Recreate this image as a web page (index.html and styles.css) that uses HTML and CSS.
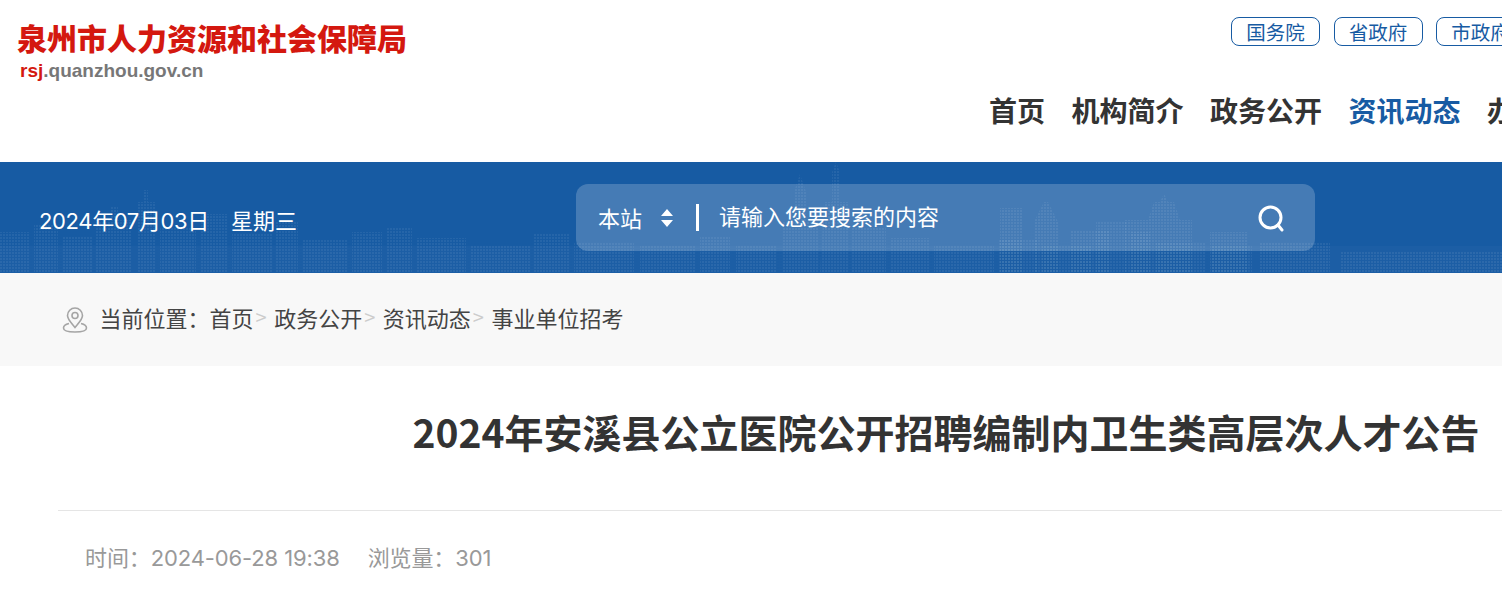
FILE: index.html
```html
<!DOCTYPE html>
<html lang="zh-CN">
<head>
  <meta charset="UTF-8">
  <meta name="viewport" content="width=device-width, initial-scale=1.0">
  <title>2024年安溪县公立医院公开招聘编制内卫生类高层次人才公告</title>
  <link rel="stylesheet" href="styles.css">
</head>
<body>
  <div class="page">
    <header class="site-header">
      <div class="logo">
        <div class="logo-name">泉州市人力资源和社会保障局</div>
        <div class="logo-url"><span>rsj</span>.quanzhou.gov.cn</div>
      </div>
      <div class="header-right">
        <div class="gov-links">
          <a class="gov-link">国务院</a>
          <a class="gov-link">省政府</a>
          <a class="gov-link">市政府</a>
        </div>
        <nav class="main-nav">
          <a>首页</a>
          <a>机构简介</a>
          <a>政务公开</a>
          <a class="active">资讯动态</a>
          <a>办事服务</a>
        </nav>
      </div>
    </header>

    <div class="search-band">
      <!-- skyline behind the band -->
      <svg class="skyline" width="1892" height="111" viewBox="0 0 1892 111">
        <defs>
          <pattern id="windows" width="3" height="3" patternUnits="userSpaceOnUse">
            <rect width="2" height="2" fill="#fff"/>
          </pattern>
        </defs>
        <path fill="url(#windows)" opacity=".06" d="M0 70h30v41H0zM34 62h24v49H34zM62 74h30v37H62zM96 58h14V44h8v14h14v53H96zM138 40h6V28h4v12h8v71h-18zM160 66h36v45h-36zM200 52h28v59h-28zM232 72h40v39h-40zM276 60h22v51h-22zM302 78h46v33h-46zM352 70h30v41h-30zM386 66h26v45h-26zM416 76h50v35h-50zM470 84h60v27h-60zM534 72h36v39h-36zM574 80h60v31h-60zM640 84h56v27h-56zM700 74h30v37h-30zM736 84h40v27h-40zM782 60h12V30l6-18 6 18v30h12v51h-36zM824 40h8V10l4-10 4 10v30h8v71h-28zM852 66h34v45h-34zM890 76h40v35h-40zM934 84h60v27h-60zM998 78h40v33h-40zM1042 84h50v27h-50zM1096 60h30v51h-30zM1130 70h20v41h-20zM1156 80h50v31h-50zM1212 84h40v27h-40z"/>
        <path fill="url(#windows)" opacity=".07" d="M1000 46h22v65h-22zM1034 60l10-20h4l10 20v51h-24zM1070 68h40v43h-40zM1124 58h24l6-18h6l4-8 4 8h6l6 18h12v53h-68zM1210 70h38v41h-38zM1260 80h70v31h-70zM1340 90h162v21h-162z"/>
        <path fill="#fff" opacity=".025" d="M0 84h1502v27H0z"/>
      </svg>
      <div class="today">2024年07月03日<span class="weekday">星期三</span></div>
      <form class="search-box">
        <span class="scope">本站</span>
        <svg class="scope-arrows" width="14" height="20" viewBox="0 0 14 20" fill="#fff">
          <path d="M7 1l6 7H1zM1 12h12l-6 7z"/>
        </svg>
        <span class="search-text">请输入您要搜索的内容</span>
        <svg class="search-icon" width="28" height="28" viewBox="0 0 28 28" fill="none" stroke="#fff" stroke-width="3" stroke-linecap="round">
          <circle cx="13.500" cy="13.500" r="10.500"/>
          <path d="M21 21l4 5"/>
        </svg>
      </form>
    </div>

    <div class="crumb-band">
      <svg class="pin" width="26" height="26" viewBox="0 0 26 26" fill="none" stroke="#a5a5a5" stroke-width="1.600">
        <path d="M13 20.500C9.500 16 5.500 12.500 5.500 8.500a7.500 7.500 0 0 1 15 0c0 4-4 7.500-7.500 12z"/>
        <circle cx="13" cy="8.500" r="3"/>
        <path d="M7 16.500C3.500 17.300 1.500 19 1.500 21c0 2.500 5 4 11.500 4s11.500-1.500 11.500-4c0-2-2-3.700-5.500-4.500"/>
      </svg>
      <span>当前位置：</span>
      <a>首页</a><i>&gt;</i>
      <a>政务公开</a><i>&gt;</i>
      <a>资讯动态</a><i>&gt;</i>
      <a>事业单位招考</a>
    </div>

    <main class="article">
      <h1>2024年安溪县公立医院公开招聘编制内卫生类高层次人才公告</h1>
      <div class="meta">
        <span>时间：2024-06-28 19:38</span>
        <span>浏览量：301</span>
      </div>
    </main>
  </div>
</body>
</html>
```
FILE: styles.css
```css
/* General Styles */
html, body {
  margin: 0;
  overflow: hidden;
}

body {
  font-family: "Noto Sans CJK SC", sans-serif;
  color: #333;
  background: #fff;
}

a {
  color: inherit;
  text-decoration: none;
}

/* the page is wider than the window and gets cut on the right */
.page {
  width: 1892px;
}

/* Header */
.site-header {
  height: 162px;
  display: flex;
  justify-content: space-between;
}

.logo {
  padding: 14px 0 0 17px;
}

.logo-name {
  font-size: 30px;
  font-weight: 900;
  line-height: 46px;
  color: #d4180f;
}

.logo-url {
  margin: 0 0 0 3px;
  font-family: "Liberation Sans", sans-serif;
  font-size: 19px;
  font-weight: bold;
  line-height: 22px;
  color: #777;
}

.logo-url span {
  color: #d4180f;
}

.header-right {
  width: 903px;
}

.gov-links {
  display: flex;
  gap: 13.500px;
  padding: 17px 0 0 242px;
}

.gov-link {
  width: 87px;
  height: 27px;
  border: 1px solid #175ba3;
  border-radius: 8px;
  font-size: 19.500px;
  line-height: 27px;
  text-align: center;
  color: #175ba3;
}

.main-nav {
  display: flex;
  gap: 26.500px;
  margin-top: 44px;
  font-size: 28px;
  font-weight: bold;
  line-height: 40px;
}

.main-nav .active {
  color: #175ba3;
}

/* Date and search */
.search-band {
  position: relative;
  height: 111px;
  display: flex;
  background: #175ba3;
  color: #fff;
  font-size: 22px;
}

.skyline {
  position: absolute;
  left: 0;
  top: 0;
}

.today {
  position: relative;
  width: 537px;
  padding: 42px 0 0 39px;
  font-family: "Inter", "Noto Sans CJK SC", sans-serif;
  letter-spacing: -0.360px;
  line-height: 34px;
}

.weekday {
  margin-left: 22px;
  letter-spacing: 0;
}

.search-box {
  position: relative;
  width: 739px;
  height: 67px;
  margin: 22px 0 0;
  display: flex;
  align-items: center;
  border-radius: 12px;
  background: rgba(255, 255, 255, 0.2);
}

.scope {
  margin: -2px 0 0 22px;
}

.scope-arrows {
  margin-left: 18px;
}

.search-text {
  margin-left: 22px;
  padding: 0 0 4px 20px;
  border-left: 3px solid #fff;
  line-height: 23px;
}

.search-icon {
  margin-left: auto;
  margin-right: 30px;
}

/* Breadcrumb */
.crumb-band {
  height: 93px;
  display: flex;
  align-items: center;
  padding: 0 0 6px 62px;
  box-sizing: border-box;
  background: #f8f8f8;
  font-size: 22px;
  color: #444;
}

.pin {
  margin: 6px 11.500px 0 0;
}

.crumb-band i {
  margin: 0 7.500px 0 2px;
  font-style: normal;
  font-size: 20px;
  color: #ccc;
}

/* Article */
.article {
  margin: 0 58px;
}

.article h1 {
  margin: 0;
  height: 144px;
  border-bottom: 1px solid #e5e5e5;
  font-size: 39px;
  font-weight: bold;
  line-height: 131px;
  text-align: center;
  color: #333;
}

.meta {
  display: flex;
  gap: 28px;
  padding: 30px 0 0 27px;
  font-family: "Inter", "Noto Sans CJK SC", sans-serif;
  letter-spacing: -0.120px;
  font-size: 22px;
  line-height: 34px;
  color: #999;
}
```
